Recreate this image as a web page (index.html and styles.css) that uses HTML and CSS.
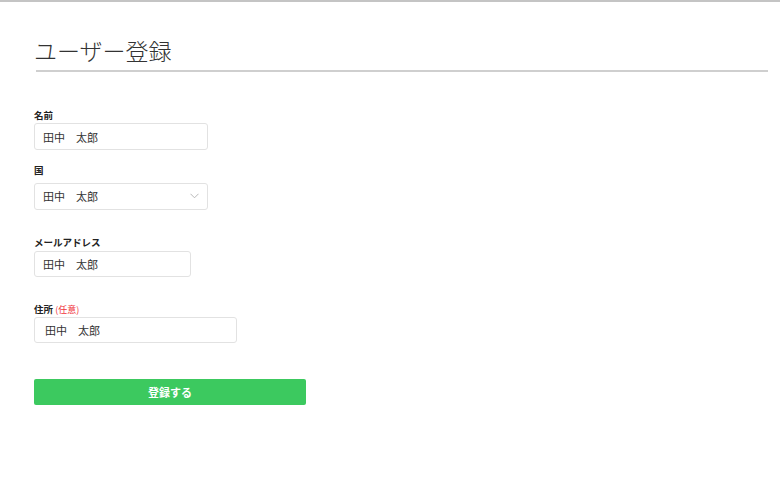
FILE: index.html
```html
<!doctype html>
<html lang="ja">
 <head>
  <meta charset="UTF-8">
  <title>ユーザー登録</title>
  <meta name="viewport" content="width=device-width, initial-scale=1.0">
  <link rel="stylesheet" href="styles.css">
 </head>
 <body>
  <div class="page">
   <h1 class="title">ユーザー登録</h1>

   <form class="form">
    <div class="field field-name">
     <label class="label">名前</label>
     <input class="input input-name" type="text" value="田中　太郎">
    </div>

    <div class="field field-country">
     <label class="label">国</label>
     <div class="select-wrap">
      <select class="input select">
       <option>田中　太郎</option>
      </select>
      <svg class="chevron" width="9" height="6" viewBox="0 0 9 6">
       <path d="M0.5 0.8 L4.5 4.8 L8.5 0.8" fill="none" stroke="#b0b0b0" stroke-width="0.9"/>
      </svg>
     </div>
    </div>

    <div class="field field-mail">
     <label class="label">メールアドレス</label>
     <input class="input input-mail" type="text" value="田中　太郎">
    </div>

    <div class="field field-address">
     <label class="label">住所 <span class="optional">(任意)</span></label>
     <input class="input input-address" type="text" value="田中　太郎">
    </div>

    <button class="submit" type="button">登録する</button>
   </form>
  </div>
 </body>
</html>
```

FILE: styles.css
```css
html, body {
  margin: 0;
  padding: 0;
}

body {
  background: #fff;
  color: #333;
  font-family: "Noto Sans CJK JP", "Noto Sans", sans-serif;
  border-top: 2px solid #c4c4c4;
}

.page {
  padding: 0 12px 0 34px;
}

.title {
  margin: 0 0 0 2px;
  padding: 33px 0 5px 0;
  font-size: 23px;
  font-weight: 300;
  line-height: 30px;
  color: #333;
  border-bottom: 2px solid #cfcfcf;
  text-indent: -2px;
}

.form {
  display: flex;
  flex-direction: column;
  align-items: flex-start;
  padding-top: 36px;
}

.field {
  display: flex;
  flex-direction: column;
}

.label {
  font-size: 9.5px;
  font-weight: bold;
  line-height: 14px;
  color: #222;
}

.optional {
  font-size: 9px;
  font-weight: normal;
  color: #f0353a;
}

.input {
  box-sizing: border-box;
  height: 27px;
  margin: 0;
  padding: 0 8px;
  border: 1px solid #e2e2e2;
  border-radius: 3px;
  background: #fff;
  font-family: inherit;
  font-size: 11px;
  color: #333;
  outline: none;
}

.field-name .label { margin-bottom: 1px; }
.input-name { width: 174px; }

.field-country { margin-top: 13px; }
.field-country .label { margin-bottom: 5px; }

.select-wrap {
  position: relative;
  width: 174px;
}

.select {
  width: 100%;
  appearance: none;
  -webkit-appearance: none;
}

.chevron {
  position: absolute;
  right: 9px;
  top: 11px;
}

.field-mail { margin-top: 25px; }
.field-mail .label { margin-bottom: 2px; }
.input-mail { width: 157px; height: 26px; }

.field-address { margin-top: 25px; }
.input-address { width: 203px; height: 26px; padding-left: 10px; }

.submit {
  margin-top: 36px;
  width: 272px;
  height: 26px;
  border: none;
  border-radius: 2px;
  background: #3cc95f;
  color: #fff;
  font-family: inherit;
  font-size: 11px;
  font-weight: bold;
  cursor: pointer;
}
```
